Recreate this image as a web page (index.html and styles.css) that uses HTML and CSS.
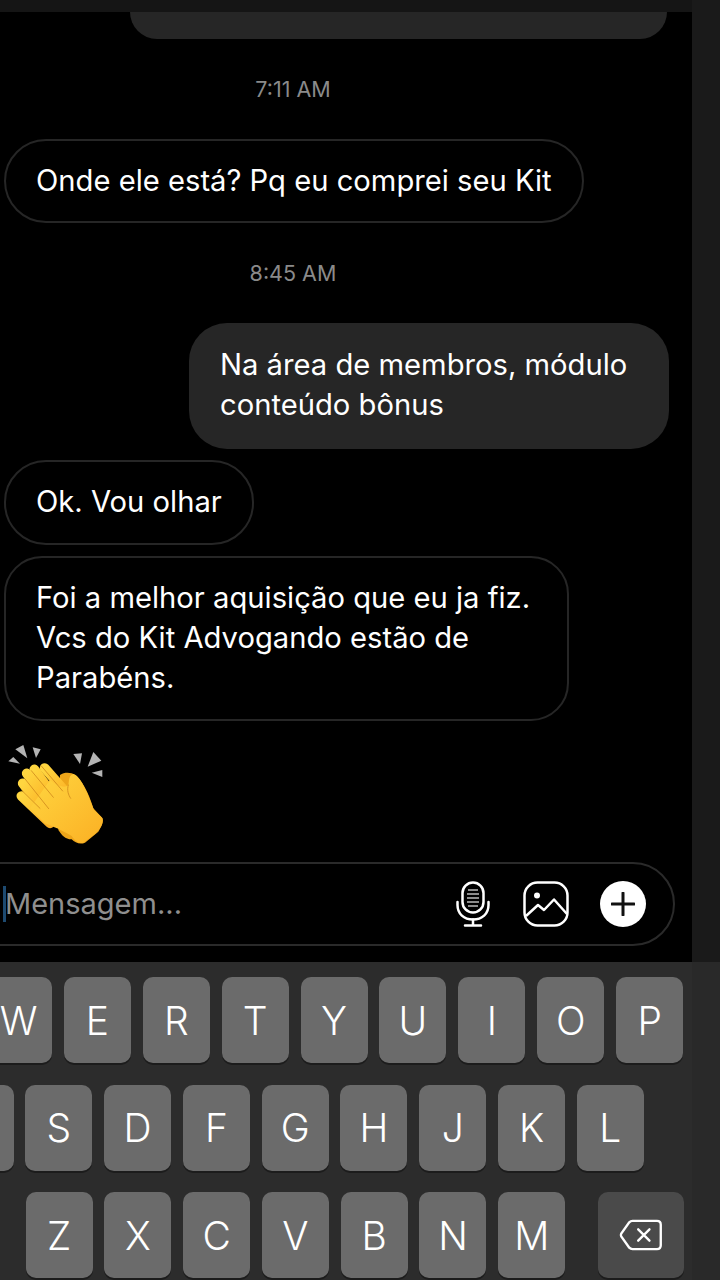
FILE: index.html
```html
<!doctype html>
<html>
  <head>
    <title>Mensagens</title>
    <link rel="stylesheet" href="styles.css">
  </head>
  <body>
    <div class="top-row">
      <div class="chat-top">
        <div class="topbar"></div>
        <div class="cut-bubble"></div>
      </div>
    </div>
    <div class="chat">
      <div class="time time-first">7:11 AM</div>
      <div class="bubble recv bubble-first">Onde ele está? Pq eu comprei seu Kit</div>
      <div class="time time-second">8:45 AM</div>
      <div class="bubble sent">Na área de membros, módulo<br>conteúdo bônus</div>
      <div class="bubble recv bubble-ok">Ok. Vou olhar</div>
      <div class="bubble recv bubble-long">Foi a melhor aquisição que eu ja fiz.<br>Vcs do Kit Advogando estão de<br>Parabéns.</div>
      <svg class="clap" viewBox="24 45 288 300" width="96" height="100">
        <defs>
          <linearGradient id="skin" x1="0" y1="0" x2="1" y2="1">
            <stop offset="0" stop-color="#ffd640"/>
            <stop offset="1" stop-color="#fbb024"/>
          </linearGradient>
        </defs>
        <g fill="#b4b4b4">
          <path d="M46 58 70 45 82 85Z"/>
          <path d="M98 52 122 58 108 84Z"/>
          <path d="M25 94 40 81 60 101Z"/>
          <path d="M220 72 246 70 240 102Z"/>
          <path d="M280 66 304 92 263 110Z"/>
          <path d="M275 128 307 120 307 141Z"/>
        </g>
        <path fill="#eda51a" d="M180 135C195 125 215 128 225 135C245 150 265 185 280 235L305 262C312 275 305 290 295 305L255 338C240 345 225 338 215 328C195 328 185 315 175 300Z"/>
        <g fill="none" stroke="url(#skin)" stroke-linecap="round" stroke-width="29">
          <path d="M134 114 205 195"/>
          <path d="M103 118 170 210"/>
          <path d="M80 130 150 225"/>
          <path d="M68 160 130 240"/>
          <path d="M64 198 150 280"/>
        </g>
        <path fill="url(#skin)" d="M150 150C175 170 195 175 205 165C208 150 205 138 220 132C235 135 248 160 262 190L282 240 308 265C312 280 300 298 285 312L250 338C235 342 225 332 215 318C185 300 160 290 135 280L90 235Z"/>
        <g fill="none" stroke="#d08a1c" stroke-width="2.500" stroke-linecap="round">
          <path d="M124 108 188 183"/>
          <path d="M94 122 160 202"/>
          <path d="M76 148 146 236"/>
          <path d="M66 182 120 235"/>
          <path d="M205 165C200 180 205 195 212 205"/>
        </g>
      </svg>
      <div class="composer">
        <span class="caret"></span>
        <span class="placeholder">Mensagem...</span>
        <svg class="icon mic" viewBox="0 0 34 46" width="34" height="46">
          <rect x="6.500" y="1.500" width="21" height="30" rx="10.500" fill="none" stroke="#fff" stroke-width="2.500"/>
          <path d="M12 9H22M11 13H23M11 17H23M11 21H23M12 25H22" stroke="#8c8c8c" stroke-width="2.200"/>
          <path d="M1.500 21V24C1.500 33 8 38.500 17 38.500S32.500 33 32.500 24V21" fill="none" stroke="#fff" stroke-width="2.500" stroke-linecap="round"/>
          <path d="M17 38.500V44M9 44.500H25" fill="none" stroke="#fff" stroke-width="2.500" stroke-linecap="round"/>
        </svg>
        <svg class="icon pic" viewBox="0 0 46 46" width="46" height="46">
          <rect x="1.500" y="1.500" width="43" height="43" rx="13" fill="none" stroke="#fff" stroke-width="2.500"/>
          <circle cx="14" cy="14.500" r="3" fill="#fff"/>
          <path d="M3 35 15 24 21 29 31 18.500 44 33" fill="none" stroke="#fff" stroke-width="2.500" stroke-linejoin="round"/>
        </svg>
        <span class="plus">
          <svg viewBox="0 0 24 24" width="24" height="24">
            <path d="M12 1V23M1 12H23" stroke="#111" stroke-width="3" stroke-linecap="round"/>
          </svg>
        </span>
      </div>
    </div>
    <div class="keyboard">
      <div class="key-row row-one">
        <div class="key">W</div><div class="key">E</div><div class="key">R</div><div class="key">T</div><div class="key">Y</div><div class="key">U</div><div class="key">I</div><div class="key">O</div><div class="key">P</div>
      </div>
      <div class="key-row row-two">
        <div class="key"></div><div class="key">S</div><div class="key">D</div><div class="key">F</div><div class="key">G</div><div class="key">H</div><div class="key">J</div><div class="key">K</div><div class="key">L</div>
      </div>
      <div class="key-row row-three">
        <div class="key">Z</div><div class="key">X</div><div class="key">C</div><div class="key">V</div><div class="key">B</div><div class="key">N</div><div class="key">M</div>
        <div class="key key-back">
          <svg viewBox="0 0 46 34" width="46" height="32">
            <path d="M14 2H40C42.500 2 44 3.500 44 6V28C44 30.500 42.500 32 40 32H14C12.500 32 11.500 31.500 10.500 30.500L2 18.500C1.500 17.500 1.500 16.500 2 15.500L10.500 3.500C11.500 2.500 12.500 2 14 2Z" fill="none" stroke="#fff" stroke-width="2.500"/>
            <path d="M20 11 32 23M32 11 20 23" stroke="#fff" stroke-width="2.500" stroke-linecap="round"/>
          </svg>
        </div>
      </div>
    </div>
  </body>
</html>
```

FILE: styles.css
```css
html, body {
  margin: 0;
  padding: 0;
}
body {
  width: 720px;
  height: 1280px;
  overflow: hidden;
  background-color: #1a1a1a;
  font-family: Inter, "Liberation Sans", sans-serif;
  color: #fff;
}
.chat-top {
  width: 692px;
  background-color: #000;
}
.topbar {
  height: 12px;
  background-color: #151515;
}
.cut-bubble {
  height: 27px;
  width: 537px;
  margin-left: 130px;
  background-color: #262626;
  border-radius: 0 0 30px 30px;
}
.chat {
  width: 692px;
  height: 923px;
  background-color: #000;
  display: flow-root;
  box-sizing: border-box;
}
.time {
  width: 586px;
  text-align: center;
  font-size: 21.500px;
  line-height: 24px;
  color: #8a8a8a;
}
.time-first {
  margin-top: 38px;
}
.time-second {
  margin-top: 38px;
}
.bubble {
  font-size: 29.200px;
  line-height: 40px;
  box-sizing: border-box;
}
.recv {
  margin-left: 4px;
  border: 2px solid #262626;
  border-radius: 42px;
  padding: 20px 30px;
  width: fit-content;
}
.bubble-first {
  margin-top: 38px;
}
.sent {
  margin-top: 38px;
  margin-left: 189px;
  width: 480px;
  height: 126px;
  padding: 22px 31px;
  background-color: #262626;
  border-radius: 38px;
}
.bubble-ok {
  margin-top: 11px;
  padding-bottom: 21px;
}
.bubble-long {
  margin-top: 11px;
  padding-bottom: 21px;
  width: 565px;
  border-radius: 38px;
}
.clap {
  display: block;
  margin: 24px 0 17px 8px;
}
.composer {
  display: flex;
  align-items: center;
  box-sizing: border-box;
  width: 715px;
  height: 84px;
  margin-left: -40px;
  border: 2px solid #2a2a2a;
  border-radius: 42px;
  padding-left: 41px;
}
.caret {
  width: 3px;
  height: 36px;
  background-color: #1d4a70;
}
.placeholder {
  flex: 1;
  margin-left: -1px;
  padding-bottom: 2px;
  font-size: 29px;
  color: #8f8f8f;
}
.icon {
  display: block;
}
.mic {
  margin-right: 33px;
}
.pic {
  margin-right: 31px;
}
.plus {
  display: flex;
  align-items: center;
  justify-content: center;
  width: 46px;
  height: 46px;
  margin-right: 27px;
  border-radius: 50%;
  background-color: #fff;
}
.keyboard {
  height: 318px;
  background: linear-gradient(to right, #2c2c2c 692px, #292929 692px);
  padding-top: 15px;
  box-sizing: border-box;
}
.key-row {
  display: flex;
  gap: 11.800px;
  height: 86px;
  margin-bottom: 21.500px;
}
.row-one {
  margin-left: -15px;
  gap: 11.900px;
}
.row-two {
  margin-left: -53.500px;
}
.row-three {
  margin-left: 25.500px;
}
.key {
  flex: none;
  display: flex;
  align-items: center;
  justify-content: center;
  width: 67px;
  height: 86px;
  border-radius: 10px;
  background-color: #6b6b6b;
  box-shadow: 0 2px 0 #1c1c1c;
  font-size: 39px;
  font-weight: 300;
}
.key-back {
  width: 86px;
  margin-left: 20.500px;
  background-color: #4a4a4a;
}
```
